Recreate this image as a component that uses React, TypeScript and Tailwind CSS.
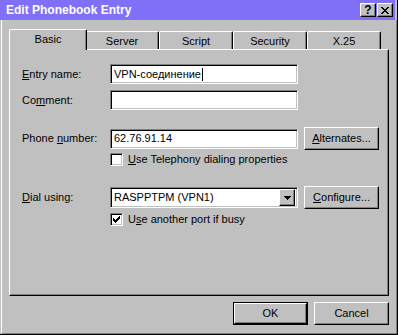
import React from "react";

// Win95-style bevels
const sunken =
  "border border-t-[#808080] border-l-[#808080] border-r-white border-b-white shadow-[inset_1px_1px_0_#000,inset_-1px_-1px_0_#c0c0c0] bg-white";
const raised =
  "border border-t-white border-l-white border-r-black border-b-black shadow-[inset_-1px_-1px_0_#808080] bg-[#c0c0c0]";

const Check = () => {
  // 7x7 pixel check mark
  const rows = [
    "......X",
    ".....XX",
    "X...XXX",
    "XX.XXX.",
    "XXXXX..",
    ".XXX...",
    "..X....",
  ];
  return (
    <svg width="7" height="7" viewBox="0 0 7 7" shapeRendering="crispEdges">
      {rows.map((r, y) =>
        r.split("").map((c, x) =>
          c === "X" ? <rect key={`${x}-${y}`} x={x} y={y} width="1" height="1" fill="#000" /> : null
        )
      )}
    </svg>
  );
};

const Checkbox = ({ checked }: { checked?: boolean }) => (
  <div className={`w-[13px] h-[13px] flex items-center justify-center ${sunken}`}>
    {checked && <Check />}
  </div>
);

const Button = ({ children, def }: { children: React.ReactNode; def?: boolean }) =>
  def ? (
    <div className="w-[75px] h-[23px] border border-black flex">
      <div className={`flex-1 flex items-center justify-center ${raised}`}>{children}</div>
    </div>
  ) : (
    <div className={`w-[75px] h-[23px] flex items-center justify-center ${raised}`}>{children}</div>
  );

const Tab = ({ label, active }: { label: string; active?: boolean }) =>
  active ? (
    <div className="relative z-10 w-[78px] h-[21px] -mx-[2px] -mb-[1px] bg-[#c0c0c0] border-l border-t border-white rounded-tl-[2px] rounded-tr-[2px] border-r border-r-black shadow-[inset_-1px_0_0_#808080] flex items-center justify-center pb-[1px]">
      {label}
    </div>
  ) : (
    <div className="w-[74px] h-[18px] bg-[#c0c0c0] border-l border-t border-white rounded-tl-[2px] rounded-tr-[2px] border-r border-r-black shadow-[inset_-1px_0_0_#808080] flex items-center justify-center pt-[1px]">
      {label}
    </div>
  );

const Label = ({ children }: { children: React.ReactNode }) => (
  <div className="w-[100px] pl-[12px] shrink-0">{children}</div>
);

const U = ({ children }: { children: React.ReactNode }) => <span className="underline underline-offset-[1px]">{children}</span>;

const App = () => {
  return (
    <div className="w-[398px] h-[335px] bg-[#c0c0c0] flex flex-col border-r border-b border-black overflow-hidden font-['Liberation_Sans',Arial,sans-serif] text-[11px] leading-[13px] text-black">
      {/* title bar */}
      <div className="h-[20px] mr-[2px] bg-[#8070f8] flex items-center pl-[6px] pr-[2px]">
        <span className="flex-1 text-white font-bold text-[12px]">Edit Phonebook Entry</span>
        <div className="flex gap-[1px]">
          <div className={`w-[16px] h-[14px] flex items-center justify-center font-bold text-[12px] ${raised}`}>?</div>
          <div className={`w-[16px] h-[14px] flex items-center justify-center ${raised}`}>
            <svg width="8" height="7" viewBox="0 0 8 7" shapeRendering="crispEdges">
              {[0, 1, 2, 3, 4, 5, 6].map((i) => (
                <g key={i}>
                  <rect x={i} y={i} width="2" height="1" fill="#000" />
                  <rect x={6 - i} y={i} width="2" height="1" fill="#000" />
                </g>
              ))}
            </svg>
          </div>
        </div>
      </div>

      {/* body */}
      <div className="flex-1 ml-[1px] border-l border-white border-r border-b border-r-[#808080] border-b-[#808080] flex flex-col">
        <div className="ml-[7px] mt-[9px] w-[380px]">
          <div className="flex items-end h-[20px] pl-[2px]">
            <Tab label="Basic" active />
            <Tab label="Server" />
            <Tab label="Script" />
            <Tab label="Security" />
            <Tab label="X.25" />
          </div>
          <div className="h-[247px] border-t border-l border-white border-r border-b border-r-black border-b-black shadow-[inset_-1px_-1px_0_#808080] flex flex-col">
            <div className="flex items-center mt-[14px]">
              <Label>
                <U>E</U>ntry name:
              </Label>
              <div className={`w-[188px] h-[20px] flex items-center pl-[3px] ${sunken}`}>
                VPN-соединение
                <span className="w-[1px] h-[13px] bg-black ml-[1px]" />
              </div>
            </div>
            <div className="flex items-center mt-[6px]">
              <Label>
                Co<U>m</U>ment:
              </Label>
              <div className={`w-[188px] h-[20px] ${sunken}`} />
            </div>

            <div className="flex items-center mt-[17px]">
              <Label>
                Phone <U>n</U>umber:
              </Label>
              <div className={`w-[188px] h-[20px] flex items-center pl-[3px] ${sunken}`}>62.76.91.14</div>
              <div className="ml-[6px]">
                <Button>
                  <span>
                    <U>A</U>lternates...
                  </span>
                </Button>
              </div>
            </div>
            <div className="flex items-center mt-[3px] ml-[100px] gap-[5px]">
              <Checkbox />
              <span>
                <U>U</U>se Telephony dialing properties
              </span>
            </div>

            <div className="flex items-center mt-[20px]">
              <Label>
                <U>D</U>ial using:
              </Label>
              <div className={`w-[188px] h-[21px] flex items-center pl-[3px] pr-[2px] ${sunken}`}>
                <span className="flex-1">RASPPTPM (VPN1)</span>
                <div className={`w-[16px] h-[17px] flex items-center justify-center ${raised}`}>
                  <svg width="7" height="4" viewBox="0 0 7 4" shapeRendering="crispEdges">
                    <polygon points="0,0 7,0 3.5,4" fill="#000" />
                  </svg>
                </div>
              </div>
              <div className="ml-[6px]">
                <Button>
                  <span>
                    <U>C</U>onfigure...
                  </span>
                </Button>
              </div>
            </div>
            <div className="flex items-center mt-[4px] ml-[100px] gap-[5px]">
              <Checkbox checked />
              <span>
                U<U>s</U>e another port if busy
              </span>
            </div>
          </div>
        </div>

        <div className="ml-[7px] mt-[6px] w-[380px] flex justify-end gap-[6px]">
          <Button def>OK</Button>
          <Button>Cancel</Button>
        </div>
      </div>
    </div>
  );
};

export default App;
